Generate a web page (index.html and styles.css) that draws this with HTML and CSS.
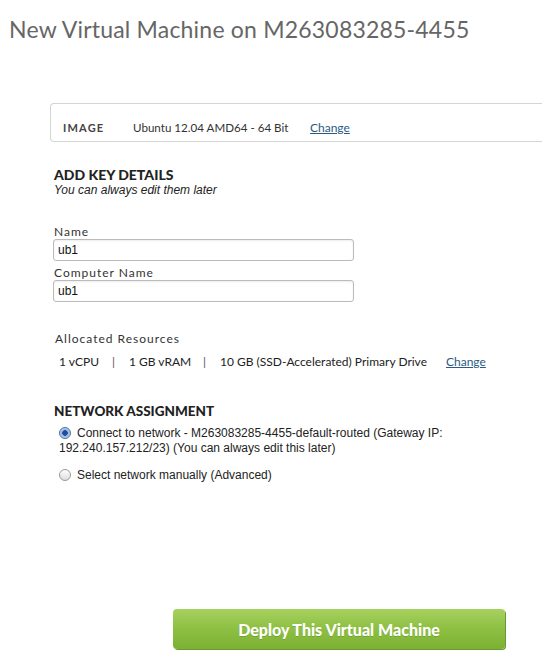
FILE: index.html
```html
<!DOCTYPE html>
<html>
<head>
<meta charset="utf-8">
<link rel="stylesheet" href="styles.css">
</head>
<body>
<h1 class="title">New Virtual Machine on M263083285-4455</h1>
<div class="image-box">
  <span class="image-label">IMAGE</span>
  <span class="image-name">Ubuntu 12.04 AMD64 - 64 Bit</span>
  <a class="link" href="#">Change</a>
</div>
<div class="details">
  <h2 class="section-title">ADD KEY DETAILS</h2>
  <p class="hint">You can always edit them later</p>
  <label class="field-label">Name</label>
  <input class="field" type="text" value="ub1">
  <label class="field-label">Computer Name</label>
  <input class="field" type="text" value="ub1">
</div>
<div class="resources">
  <div class="res-title">Allocated Resources</div>
  <div class="res-row">
    <span class="res-cpu">1 vCPU</span>
    <span class="sep">|</span>
    <span class="res-ram">1 GB vRAM</span>
    <span class="sep">|</span>
    <span class="res-drive">10 GB (SSD-Accelerated) Primary Drive</span>
    <a class="link" href="#">Change</a>
  </div>
</div>
<div class="network">
  <h2 class="section-title net">NETWORK ASSIGNMENT</h2>
  <div class="radio-row first"><span class="radio checked"></span>Connect to network - M263083285-4455-default-routed (Gateway IP: 192.240.157.212/23) (You can always edit this later)</div>
  <div class="radio-row"><span class="radio"></span>Select network manually (Advanced)</div>
</div>
<div class="actions">
  <button class="deploy">Deploy This Virtual Machine</button>
</div>
</body>
</html>
```
FILE: styles.css
```css
html, body {
  margin: 0;
  padding: 0;
  background: #fff;
  width: 542px;
  height: 659px;
  overflow: hidden;
  font-family: "Lato", "Open Sans", sans-serif;
  color: #333;
}
.title {
  margin: 0;
  padding: 14px 0 0 9px;
  font-size: 23px;
  font-weight: 400;
  letter-spacing: 0.2px;
  color: #666;
  line-height: 30px;
  white-space: nowrap;
}
.image-box {
  margin: 59px 0 0 50px;
  height: 39px;
  width: 492px;
  border: 1px solid #d4d4d4;
  border-right: none;
  border-radius: 4px 0 0 4px;
  display: flex;
  align-items: center;
  padding-top: 9px;
  box-sizing: border-box;
  font-size: 12px;
  white-space: nowrap;
}
.image-label {
  margin-left: 12px;
  width: 70px;
  font-size: 11px;
  letter-spacing: 1.2px;
  font-weight: 700;
  color: #444;
}
.image-name {
  width: 177px;
  font-size: 11.6px;
  color: #333;
}
.link {
  color: #2b5a86;
  text-decoration: underline;
  font-size: 12px;
}
.details {
  padding: 25px 0 0 54px;
}
.section-title {
  margin: 0;
  font-size: 14px;
  font-weight: 900;
  color: #222;
  line-height: 16px;
}
.section-title.net {
  font-size: 13.5px;
}
.hint {
  margin: 0;
  font-family: "Liberation Sans", Arial, sans-serif;
  font-style: italic;
  font-size: 12px;
  color: #222;
  line-height: 14px;
}
.field-label {
  display: block;
  font-size: 12px;
  letter-spacing: 1px;
  color: #333;
  line-height: 14px;
  margin-top: 5px;
}
.hint + .field-label {
  margin-top: 28px;
}
.field {
  display: block;
  margin: 0 0 0 -1px;
  width: 301px;
  height: 22px;
  box-sizing: border-box;
  border: 1px solid #bbb;
  border-radius: 3px;
  padding: 0 4px;
  font-family: "Liberation Sans", Arial, sans-serif;
  font-size: 12px;
  color: #111;
  box-shadow: inset 0 1px 2px rgba(0,0,0,0.08);
}
.resources {
  padding: 30px 0 0 55px;
  font-size: 12px;
  white-space: nowrap;
}
.res-title {
  letter-spacing: 1px;
  color: #333;
  line-height: 14px;
}
.res-row {
  display: flex;
  margin-top: 9px;
  padding-left: 4px;
  color: #222;
  line-height: 14px;
}
.res-cpu { width: 53px; }
.res-ram { width: 74px; }
.sep { width: 17px; color: #555; }
.res-drive { width: 226px; }
.network {
  padding: 34px 0 0 54px;
}
.radio-row {
  font-family: "Liberation Sans", Arial, sans-serif;
  font-size: 12px;
  color: #222;
  line-height: 15px;
  width: 420px;
  padding-left: 5px;
  margin-top: 12px;
}
.radio-row.first {
  margin-top: 7px;
}
.radio {
  display: inline-block;
  width: 12px;
  height: 12px;
  box-sizing: border-box;
  border-radius: 50%;
  border: 1px solid #999;
  background: linear-gradient(#fff, #ddd);
  vertical-align: -2px;
  margin-right: 6px;
}
.radio.checked {
  border-color: #4a6fa0;
  background: radial-gradient(circle, #1e4f9a 0 2.5px, #8fb3e0 3px, #cfe0f5 6px);
}
.actions {
  padding: 126px 0 0 173px;
}
.deploy {
  display: block;
  width: 332px;
  height: 40px;
  border: none;
  border-radius: 4px;
  background: linear-gradient(#a8d15f, #8cbf42 50%, #7db133);
  box-shadow: 1px 1px 0 #6a9a2a;
  color: #fff;
  font-family: "Lato", sans-serif;
  font-weight: 900;
  font-size: 16px;
  text-shadow: 0 1px 0 rgba(0,0,0,0.15);
}
```
